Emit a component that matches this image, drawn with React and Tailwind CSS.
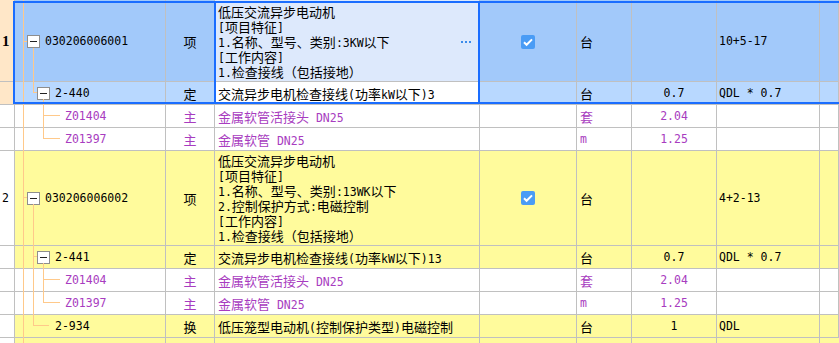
import React from 'react';

const ASCII = /^[\x20-\x7e]+$/;
function Txt({ s }) {
  return s
    .split(/([\x20-\x7e]+)/)
    .filter(Boolean)
    .map((p, i) =>
      ASCII.test(p) ? (
        <span key={i} className="font-['DejaVu_Sans_Mono',monospace] text-[11.5px] leading-[11px] whitespace-pre">
          {p}
        </span>
      ) : (
        <span key={i}>{p}</span>
      )
    );
}

function Box() {
  return (
    <div className="w-[13px] h-[13px] shrink-0 border border-[#8E8E8E] bg-white flex items-center justify-center">
      <div className="w-[7px] h-[1px] bg-[#222]" />
    </div>
  );
}

function Check() {
  return (
    <svg width="14" height="14" viewBox="0 0 14 14">
      <rect width="14" height="14" rx="2" fill="#4A9CF5" />
      <path d="M3 7.3 L5.6 9.8 L11 4.4" fill="none" stroke="#fff" strokeWidth="2" />
    </svg>
  );
}

const PURPLE = 'text-[#A83CC0]';
const YEL = 'bg-[#FFFB9C]';

const rows = [
  {
    h: 'h-[82px]', pt: 'pt-[2px]', hdrBg: 'bg-[#FFE7C8]', bg: 'bg-[#A2C9FA]', nameBg: 'bg-[#DDE9FC]',
    label: '1', bold: true, pad: 'pl-[12px]', box: true, code: '030206006001', type: '项',
    lines: ['低压交流异步电动机', '[项目特征]', '1.名称、型号、类别:3KW以下', '[工作内容]', '1.检查接线（包括接地）'],
    chk: true, unit: '台', qty: '', f: '10+5-17', dots: true,
  },
  {
    h: 'h-[23px]', hdrBg: 'bg-[#FFE7C8]', bg: 'bg-[#B8D8FF]', nameBg: 'bg-white',
    pad: 'pl-[22px]', box: true, code: '2-440', type: '定',
    lines: ['交流异步电机检查接线(功率kW以下)3'], unit: '台', qty: '0.7', f: 'QDL * 0.7',
  },
  {
    h: 'h-[23px]', hdrBg: 'bg-white', bg: 'bg-white', nameBg: 'bg-white', color: PURPLE,
    pad: 'pl-[50px]', code: 'Z01404', type: '主', lines: ['金属软管活接头 DN25'], unit: '套', qty: '2.04', f: '',
  },
  {
    h: 'h-[23px]', hdrBg: 'bg-white', bg: 'bg-white', nameBg: 'bg-white', color: PURPLE,
    pad: 'pl-[50px]', code: 'Z01397', type: '主', lines: ['金属软管 DN25'], unit: 'm', qty: '1.25', f: '',
  },
  {
    h: 'h-[95px]', hdrBg: 'bg-white', bg: YEL, nameBg: YEL,
    label: '2', pad: 'pl-[12px]', box: true, code: '030206006002', type: '项',
    lines: ['低压交流异步电动机', '[项目特征]', '1.名称、型号、类别:13WK以下', '2.控制保护方式:电磁控制', '[工作内容]', '1.检查接线（包括接地）'],
    chk: true, unit: '台', qty: '', f: '4+2-13',
  },
  {
    h: 'h-[23px]', hdrBg: 'bg-white', bg: YEL, nameBg: YEL,
    pad: 'pl-[22px]', box: true, code: '2-441', type: '定',
    lines: ['交流异步电机检查接线(功率kW以下)13'], unit: '台', qty: '0.7', f: 'QDL * 0.7',
  },
  {
    h: 'h-[23px]', hdrBg: 'bg-white', bg: 'bg-white', nameBg: 'bg-white', color: PURPLE,
    pad: 'pl-[50px]', code: 'Z01404', type: '主', lines: ['金属软管活接头 DN25'], unit: '套', qty: '2.04', f: '',
  },
  {
    h: 'h-[23px]', hdrBg: 'bg-white', bg: 'bg-white', nameBg: 'bg-white', color: PURPLE,
    pad: 'pl-[50px]', code: 'Z01397', type: '主', lines: ['金属软管 DN25'], unit: 'm', qty: '1.25', f: '',
  },
  {
    h: 'h-[23px]', hdrBg: 'bg-white', bg: YEL, nameBg: YEL,
    pad: 'pl-[40px]', code: '2-934', type: '换', lines: ['低压笼型电动机(控制保护类型)电磁控制'], unit: '台', qty: '1', f: 'QDL',
  },
];

const cellB = 'shrink-0 border-r border-[#C0C0C0] flex items-center';

function Row({ r }) {
  const col = r.color || 'text-black';
  return (
    <div className={`flex border-b border-[#C0C0C0] ${r.h} ${col}`}>
      <div className={`${cellB} w-[15px] pl-[2px] ${r.hdrBg} ${r.pt || ''}`}>
        {r.label &&
          (r.bold ? (
            <span className="font-['Liberation_Serif',serif] font-bold text-[15px] leading-[15px] text-black">{r.label}</span>
          ) : (
            <span className="font-['DejaVu_Sans_Mono',monospace] text-[11.5px] leading-[11px] text-black">{r.label}</span>
          ))}
      </div>
      <div className={`${cellB} w-[151px] ${r.pad} ${r.bg} ${r.pt || ''}`}>
        {r.box && <Box />}
        <span className={`${r.box ? 'ml-[5px]' : ''} font-['DejaVu_Sans_Mono',monospace] text-[11.5px] leading-[11px] whitespace-pre`}>{r.code}</span>
      </div>
      <div className={`${cellB} w-[49px] justify-center ${r.bg} ${r.pt || ''}`}>
        <Txt s={r.type} />
      </div>
      <div className={`${cellB} w-[265px] pl-[3px] ${r.nameBg} ${r.pt || ''}`}>
        <div className="flex-1 whitespace-nowrap">
          {r.lines.map((l, i) => (
            <div key={i} className="h-[15px] leading-[15px]">
              <Txt s={l} />
            </div>
          ))}
        </div>
        {r.dots && (
          <div className="flex gap-[2px] mr-[8px]">
            <div className="w-[2px] h-[2px] bg-[#3B8BEA]" />
            <div className="w-[2px] h-[2px] bg-[#3B8BEA]" />
            <div className="w-[2px] h-[2px] bg-[#3B8BEA]" />
          </div>
        )}
      </div>
      <div className={`${cellB} w-[97px] justify-center ${r.bg} ${r.pt || ''}`}>{r.chk && <Check />}</div>
      <div className={`${cellB} w-[55px] pl-[3px] ${r.bg} ${r.pt || ''}`}>
        <Txt s={r.unit} />
      </div>
      <div className={`${cellB} w-[85px] justify-center ${r.bg} ${r.pt || ''}`}>
        <Txt s={r.qty} />
      </div>
      <div className={`${cellB} w-[103px] pl-[2px] text-black ${r.bg} ${r.pt || ''}`}>
        <Txt s={r.f} />
      </div>
      <div className={`${cellB} flex-1 ${r.bg}`} />
    </div>
  );
}

function PartialRow() {
  return (
    <div className="flex h-[40px]">
      <div className="shrink-0 w-[15px] border-r border-[#C0C0C0] bg-white" />
      <div className={`shrink-0 w-[151px] border-r border-[#C0C0C0] ${YEL}`} />
      <div className={`shrink-0 w-[49px] border-r border-[#C0C0C0] ${YEL}`} />
      <div className={`shrink-0 w-[265px] border-r border-[#C0C0C0] pl-[3px] pt-[3px] whitespace-nowrap ${YEL}`}>
        <div className="h-[15px] leading-[15px]">低压交流异步电动机</div>
      </div>
      <div className={`shrink-0 w-[97px] border-r border-[#C0C0C0] ${YEL}`} />
      <div className={`shrink-0 w-[55px] border-r border-[#C0C0C0] ${YEL}`} />
      <div className={`shrink-0 w-[85px] border-r border-[#C0C0C0] ${YEL}`} />
      <div className={`shrink-0 w-[103px] border-r border-[#C0C0C0] ${YEL}`} />
      <div className={`flex-1 ${YEL}`} />
    </div>
  );
}

function TreeLines() {
  const c = '#FFC98A';
  const V = (x, y1, y2) => <line x1={x + 0.5} y1={y1} x2={x + 0.5} y2={y2 + 1} stroke={c} />;
  const H = (y, x1, x2) => <line x1={x1} y1={y + 0.5} x2={x2} y2={y + 0.5} stroke={c} />;
  return (
    <svg className="absolute top-0 left-0 pointer-events-none" width="839" height="343" shapeRendering="crispEdges">
      {V(23, 0, 343)}
      {H(41, 23, 27)}
      {V(33, 48, 92)}
      {H(92, 33, 37)}
      {V(43, 99, 138)}
      {H(115, 43, 60)}
      {H(138, 43, 60)}
      {H(197, 23, 27)}
      {V(33, 204, 325)}
      {H(256, 33, 37)}
      {H(325, 33, 49)}
      {V(43, 263, 302)}
      {H(279, 43, 60)}
      {H(302, 43, 60)}
    </svg>
  );
}

export default function App() {
  return (
    <div className="relative w-[839px] h-[343px] overflow-hidden bg-white font-['Noto_Sans_CJK_SC',sans-serif] text-[13px] leading-[15px] text-black">
      <div className="flex flex-col">
        {rows.map((r, i) => (
          <Row key={i} r={r} />
        ))}
        <PartialRow />
      </div>
      <TreeLines />
      <div className="absolute top-[1px] left-[13px] right-[-6px] h-[103px] border-2 border-[#1A6DFF] pointer-events-none" />
      <div className="absolute top-[1px] left-[214px] w-[266px] h-[103px] border-2 border-[#1A6DFF] pointer-events-none" />
    </div>
  );
}
